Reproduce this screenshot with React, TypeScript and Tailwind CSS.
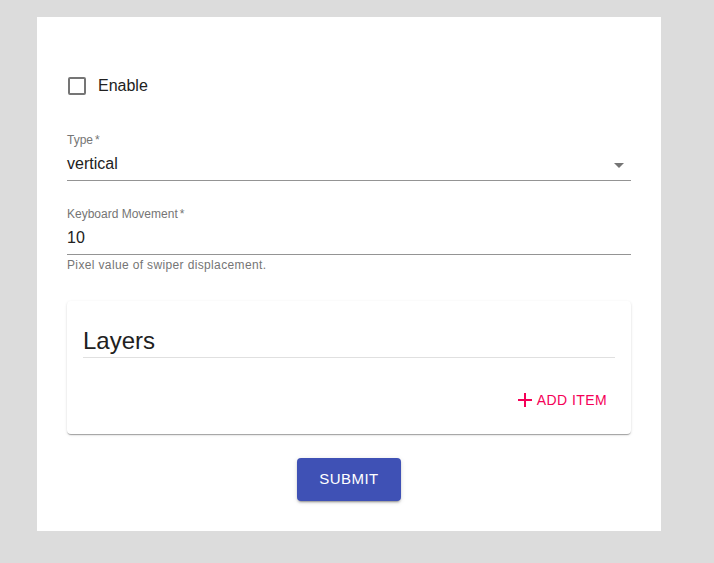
const font = { fontFamily: '"Liberation Sans", Arial, sans-serif' };

const Field = ({ label, value, helper, select }: { label: string; value: string; helper?: string; select?: boolean }) => (
  <div className="flex flex-col">
    <label className="text-[12px] leading-none text-[#757575]">
      {label}
      <span className="ml-[2px]">*</span>
    </label>
    <div className="relative mt-[3px] flex h-[32px] items-center border-b border-[#949494] pb-[1px] text-[16px] text-[#212121]">
      <span>{value}</span>
      {select && (
        <svg viewBox="0 0 24 24" className="absolute right-0 top-[4px] h-6 w-6 fill-[#757575]">
          <path d="M7 10l5 5 5-5z" />
        </svg>
      )}
    </div>
    {helper && (
      <p className="text-[12px] leading-[20px] tracking-[0.03em] text-[#757575]">{helper}</p>
    )}
  </div>
);

export default function App() {
  return (
    <div className="min-h-[563px] bg-[#dcdcdc] pl-[37px] pt-[17px]" style={font}>
      <div className="w-[624px] bg-white px-[30px] pb-[30px] pt-[48px]">
        <label className="-ml-[11px] flex items-center">
          <span className="flex h-[42px] w-[42px] items-center justify-center">
            <span className="h-[18px] w-[18px] rounded-[2px] border-2 border-[#757575]" />
          </span>
          <span className="text-[16px] text-[#212121]">Enable</span>
        </label>

        <div className="mt-[27px] flex flex-col gap-[27px]">
          <Field label="Type" value="vertical" select />
          <Field label="Keyboard Movement" value="10" helper="Pixel value of swiper displacement." />
        </div>

        <div className="mt-[26px] rounded-[4px] bg-white px-4 pb-4 pt-6 shadow-[0_2px_1px_-1px_rgba(0,0,0,0.2),0_1px_1px_0_rgba(0,0,0,0.14),0_1px_3px_0_rgba(0,0,0,0.12)]">
          <h2 className="border-b border-[#e0e0e0] text-[24px] leading-[32px] text-[#212121]">Layers</h2>
          <div className="mt-6 flex justify-end">
            <button className="flex h-[36px] items-center rounded-[4px] px-2 text-[14px] font-medium uppercase tracking-[0.03em] text-[#f50057]">
              <svg viewBox="0 0 24 24" className="h-6 w-6 fill-[#f50057]">
                <path d="M19 13h-6v6h-2v-6H5v-2h6V5h2v6h6v2z" />
              </svg>
              Add item
            </button>
          </div>
        </div>

        <div className="mt-6 flex justify-center">
          <button className="h-[43px] w-[104px] rounded-[4px] bg-[#3f51b5] text-[15px] font-medium uppercase tracking-[0.03em] text-white shadow-[0_3px_1px_-2px_rgba(0,0,0,0.2),0_2px_2px_0_rgba(0,0,0,0.14),0_1px_5px_0_rgba(0,0,0,0.12)]">
            Submit
          </button>
        </div>
      </div>
    </div>
  );
}
